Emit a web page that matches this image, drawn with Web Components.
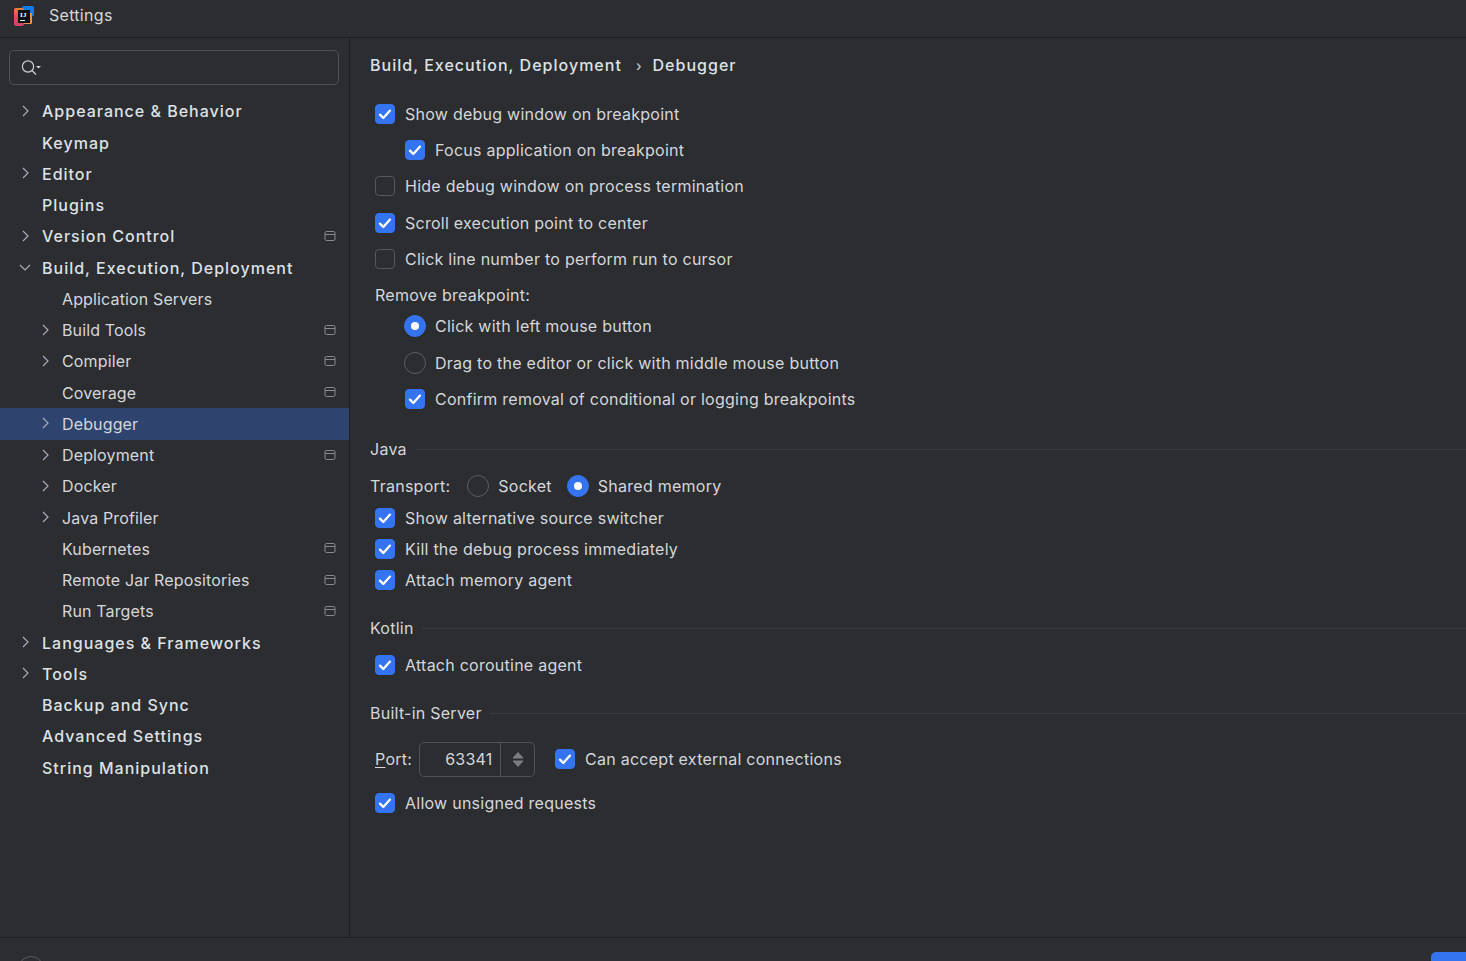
<!DOCTYPE html>
<html>
<head>
<meta charset="utf-8">
<title>Settings</title>
<style>
html, body { margin: 0; height: 100%; background: #2b2d30; }
body { overflow: hidden; font-family: 'Inter', 'Liberation Sans', sans-serif; color: #dfe1e5; }
</style>
</head>
<body>
<settings-window>
    <settings-titlebar slot="title">Settings</settings-titlebar>
    <settings-sidebar slot="side">
        <tree-item top arrow="right">Appearance &amp; Behavior</tree-item>
        <tree-item top>Keymap</tree-item>
        <tree-item top arrow="right">Editor</tree-item>
        <tree-item top>Plugins</tree-item>
        <tree-item top arrow="right" project>Version Control</tree-item>
        <tree-item top arrow="down">Build, Execution, Deployment</tree-item>
        <tree-item>Application Servers</tree-item>
        <tree-item arrow="right" project>Build Tools</tree-item>
        <tree-item arrow="right" project>Compiler</tree-item>
        <tree-item project>Coverage</tree-item>
        <tree-item arrow="right" selected>Debugger</tree-item>
        <tree-item arrow="right" project>Deployment</tree-item>
        <tree-item arrow="right">Docker</tree-item>
        <tree-item arrow="right">Java Profiler</tree-item>
        <tree-item project>Kubernetes</tree-item>
        <tree-item project>Remote Jar Repositories</tree-item>
        <tree-item project>Run Targets</tree-item>
        <tree-item top arrow="right">Languages &amp; Frameworks</tree-item>
        <tree-item top arrow="right">Tools</tree-item>
        <tree-item top>Backup and Sync</tree-item>
        <tree-item top>Advanced Settings</tree-item>
        <tree-item top>String Manipulation</tree-item>
    </settings-sidebar>
    <settings-panel slot="main">
        <option-group gap="12.3" style="margin-top:25.8px">
            <check-box checked>Show debug window on breakpoint</check-box>
            <check-box checked indent>Focus application on breakpoint</check-box>
            <check-box>Hide debug window on process termination</check-box>
            <check-box checked>Scroll execution point to center</check-box>
            <check-box>Click line number to perform run to cursor</check-box>
            <plain-label>Remove breakpoint:</plain-label>
        </option-group>
        <option-group gap="12.5" style="margin-top:7.2px">
            <radio-box checked indent>Click with left mouse button</radio-box>
            <radio-box indent>Drag to the editor or click with middle mouse button</radio-box>
            <check-box checked indent>Confirm removal of conditional or logging breakpoints</check-box>
        </option-group>
        <section-title style="margin-top:26px">Java</section-title>
        <transport-row style="margin-top:13px"></transport-row>
        <option-group gap="7" style="margin-top:8px">
            <check-box checked>Show alternative source switcher</check-box>
            <check-box checked>Kill the debug process immediately</check-box>
            <check-box checked>Attach memory agent</check-box>
        </option-group>
        <section-title style="margin-top:24px">Kotlin</section-title>
        <option-group style="margin-top:13px">
            <check-box checked>Attach coroutine agent</check-box>
        </option-group>
        <section-title style="margin-top:24px">Built-in Server</section-title>
        <port-row style="margin-top:16.5px"></port-row>
        <option-group style="margin-top:14.5px">
            <check-box checked>Allow unsigned requests</check-box>
        </option-group>
    </settings-panel>
    <settings-footer slot="foot"></settings-footer>
</settings-window>

<script>
const boxCheck = `<svg width="14" height="14" viewBox="0 0 14 14" fill="none"><path d="M2 7.6 L5.3 11 L12 3.6" stroke="#fff" stroke-width="2.3" stroke-linecap="round" stroke-linejoin="round"/></svg>`;

class SettingsWindow extends HTMLElement {
    constructor() {
        super();
        this.attachShadow({mode: 'open'});
        this.shadowRoot.innerHTML = `
        <style>
            :host { display: grid; width: 1466px; height: 961px; overflow: hidden;
                grid-template-rows: 38px 899px 24px; grid-template-columns: 350px 1fr; }
            .title { grid-column: 1 / 3; }
            .foot { grid-column: 1 / 3; }
        </style>
        <div class="title"><slot name="title"></slot></div>
        <slot name="side"></slot>
        <slot name="main"></slot>
        <div class="foot"><slot name="foot"></slot></div>`;
    }
}

class SettingsTitlebar extends HTMLElement {
    constructor() {
        super();
        this.attachShadow({mode: 'open'});
        this.shadowRoot.innerHTML = `
        <style>
            :host { display: flex; align-items: center; height: 38px; box-sizing: border-box;
                border-bottom: 1px solid #1e1f22; padding: 0 0 7px 14px; font-size: 16px; color: #d5d7db;
                letter-spacing: 0.3px; }
            svg { margin-right: 15px; }
        </style>
        <svg width="20" height="21" viewBox="0 0 20 21">
            <defs>
                <linearGradient id="left" x1="0" y1="0" x2="0" y2="1">
                    <stop offset="0" stop-color="#f0803c"/>
                    <stop offset="0.5" stop-color="#e8445a"/>
                    <stop offset="1" stop-color="#d8406e"/>
                </linearGradient>
            </defs>
            <rect x="8" y="1" width="12" height="10" rx="1.5" fill="#0b7cf0"/>
            <rect x="8" y="8" width="10" height="11" rx="1" fill="#f09040"/>
            <rect x="0" y="3" width="10" height="18" rx="2" fill="url(#left)"/>
            <rect x="4" y="5" width="12" height="13" fill="#101114"/>
            <path d="M6 15.5 H11" stroke="#e8e8e8" stroke-width="1"/>
            <text x="6" y="12" font-family="Liberation Serif" font-weight="700" font-size="7" fill="#fff">IJ</text>
        </svg>
        <slot></slot>`;
    }
}

class SettingsSidebar extends HTMLElement {
    constructor() {
        super();
        this.attachShadow({mode: 'open'});
        this.shadowRoot.innerHTML = `
        <style>
            :host { display: block; box-sizing: border-box; border-right: 1px solid #1e1f22; padding-top: 12px; }
            .search { display: flex; align-items: center; height: 35px; box-sizing: border-box; margin: 0 10px 10.85px 9px;
                border: 1px solid #4e5157; border-radius: 5px; padding-left: 11px; }
        </style>
        <div class="search">
            <svg width="22" height="18" viewBox="0 0 22 18" fill="none">
                <circle cx="7" cy="7.5" r="5.6" stroke="#ced0d6" stroke-width="1.2"/>
                <path d="M11 11.5 L15 15.5" stroke="#ced0d6" stroke-width="1.2"/>
                <path d="M15 7 H20 L17.5 9.6Z" fill="#ced0d6"/>
            </svg>
        </div>
        <slot></slot>`;
    }
}

class TreeItem extends HTMLElement {
    constructor() {
        super();
        this.attachShadow({mode: 'open'});
        const arrow = this.getAttribute('arrow');
        let icon = '';
        if (arrow == 'right') icon = '<path d="M6 3 L11 8 L6 13"/>';
        if (arrow == 'down') icon = '<path d="M3 6 L8 11 L13 6"/>';
        this.shadowRoot.innerHTML = `
        <style>
            :host { display: flex; align-items: center; height: 31.25px; position: relative;
                padding-left: 62px; padding-right: 13px; font-size: 16px; letter-spacing: 0.14px; color: #d5d7db; }
            :host([top]) { padding-left: 42px; font-weight: 500; letter-spacing: 1px; color: #dfe1e5; }
            :host([selected]) { background: #2e436e; }
            .arrow { position: absolute; left: 36.5px; top: 7px; }
            :host([top]) .arrow { left: 16.5px; }
            .text { flex: 1; }
            .project { display: none; margin-top: -1px; }
            :host([project]) .project { display: block; }
        </style>
        <svg class="arrow" width="16" height="16" viewBox="0 0 16 16" fill="none" stroke="#a8adbd" stroke-width="1.2">${icon}</svg>
        <span class="text"><slot></slot></span>
        <svg class="project" width="12" height="12" viewBox="0 0 12 12" fill="none" stroke="#868a91" stroke-width="1">
            <rect x="1" y="1.5" width="10" height="9" rx="1.5"/>
            <path d="M1 4.5 H11"/>
        </svg>`;
    }
}

class SettingsPanel extends HTMLElement {
    constructor() {
        super();
        this.attachShadow({mode: 'open'});
        this.shadowRoot.innerHTML = `
        <style>
            :host { display: block; padding: 0 0 0 20px; font-size: 16px; letter-spacing: 0.25px; color: #d5d7db; min-width: 0; overflow: hidden; }
            .crumbs { display: flex; align-items: center; height: 22px; margin-top: 16px; font-weight: 500;
                letter-spacing: 1.02px; color: #dfe1e5; }
            .sep { margin: 0 10px 0 14px; font-size: 14px; color: #c4c7cd; }
        </style>
        <div class="crumbs"><span>Build, Execution, Deployment</span><span class="sep">›</span><span>Debugger</span></div>
        <slot></slot>`;
    }
}

class OptionGroup extends HTMLElement {
    constructor() {
        super();
        this.attachShadow({mode: 'open'});
        this.shadowRoot.innerHTML = `
        <style>
            :host { display: flex; flex-direction: column; gap: ${this.getAttribute('gap') || 0}px; }
        </style>
        <slot></slot>`;
    }
}

class CheckBox extends HTMLElement {
    constructor() {
        super();
        this.attachShadow({mode: 'open'});
        this.shadowRoot.innerHTML = `
        <style>
            :host { display: flex; align-items: center; height: 24px; padding-left: 5px; }
            :host([indent]) { padding-left: 35px; }
            :host([inline]) { padding-left: 0; }
            .box { width: 20px; height: 20px; box-sizing: border-box; border: 1px solid #54575d; border-radius: 4px;
                margin-right: 10px; display: flex; align-items: center; justify-content: center; }
            :host([checked]) .box { background: #3574f0; border-color: #3574f0; }
        </style>
        <span class="box">${this.hasAttribute('checked') ? boxCheck : ''}</span>
        <slot></slot>`;
    }
}

class RadioBox extends HTMLElement {
    constructor() {
        super();
        this.attachShadow({mode: 'open'});
        this.shadowRoot.innerHTML = `
        <style>
            :host { display: flex; align-items: center; height: 24px; padding-left: 5px; }
            :host([indent]) { padding-left: 34px; }
            :host([inline]) { padding-left: 0; }
            .dot { width: 22px; height: 22px; box-sizing: border-box; border: 1px solid #5a5d63; border-radius: 50%;
                margin-right: 9px; display: flex; align-items: center; justify-content: center; }
            :host([checked]) .dot { background: #3574f0; border-color: #3574f0; }
            :host([checked]) .dot::after { content: ''; width: 8px; height: 8px; border-radius: 50%; background: #fff; }
        </style>
        <span class="dot"></span>
        <slot></slot>`;
    }
}

class PlainLabel extends HTMLElement {
    constructor() {
        super();
        this.attachShadow({mode: 'open'});
        this.shadowRoot.innerHTML = `
        <style>:host { display: flex; align-items: center; height: 24px; padding-left: 5px; }</style>
        <slot></slot>`;
    }
}

class SectionTitle extends HTMLElement {
    constructor() {
        super();
        this.attachShadow({mode: 'open'});
        this.shadowRoot.innerHTML = `
        <style>
            :host { display: flex; align-items: center; height: 24px; gap: 8px; }
            .line { flex: 1; height: 1px; background: #393b40; }
        </style>
        <slot></slot><span class="line"></span>`;
    }
}

class TransportRow extends HTMLElement {
    constructor() {
        super();
        this.attachShadow({mode: 'open'});
        this.shadowRoot.innerHTML = `
        <style>
            :host { display: flex; align-items: center; height: 24px; }
            .label { margin-right: 17px; }
            radio-box + radio-box { margin-left: 15px; }
        </style>
        <span class="label">Transport:</span>
        <radio-box inline>Socket</radio-box>
        <radio-box inline checked>Shared memory</radio-box>`;
    }
}

class PortRow extends HTMLElement {
    constructor() {
        super();
        this.attachShadow({mode: 'open'});
        this.shadowRoot.innerHTML = `
        <style>
            :host { display: flex; align-items: center; height: 35px; padding-left: 5px; }
            u { text-underline-offset: 2px; }
            .spin { display: flex; width: 116px; height: 35px; box-sizing: border-box; margin: 0 20px 0 7px;
                border: 1px solid #4e5157; border-radius: 5px; }
            .value { width: 81px; box-sizing: border-box; border-right: 1px solid #4e5157; text-align: right;
                padding-right: 7.5px; line-height: 33px; }
            .arrows { flex: 1; display: flex; align-items: center; justify-content: center; }
        </style>
        <span><u>P</u>ort:</span>
        <div class="spin">
            <div class="value">63341</div>
            <div class="arrows">
                <svg width="14" height="20" viewBox="0 0 14 20"><path d="M7 3.5 L12 9 H2Z M2 12 H12 L7 17.5Z" fill="#7a7e85" stroke="#7a7e85" stroke-linejoin="round"/></svg>
            </div>
        </div>
        <check-box inline checked>Can accept external connections</check-box>`;
    }
}

class SettingsFooter extends HTMLElement {
    constructor() {
        super();
        this.attachShadow({mode: 'open'});
        this.shadowRoot.innerHTML = `
        <style>
            :host { display: block; height: 24px; box-sizing: border-box; border-top: 1px solid #1e1f22; position: relative; overflow: hidden; }
            .help { position: absolute; left: 18px; top: 18px; width: 26px; height: 26px; box-sizing: border-box;
                border: 1px solid #5a5d63; border-radius: 50%; }
            .ok { position: absolute; left: 1431px; top: 14px; width: 60px; height: 30px; background: #3574f0; border-radius: 5px; }
        </style>
        <div class="help"></div>
        <div class="ok"></div>`;
    }
}

customElements.define('settings-window', SettingsWindow);
customElements.define('settings-titlebar', SettingsTitlebar);
customElements.define('settings-sidebar', SettingsSidebar);
customElements.define('tree-item', TreeItem);
customElements.define('settings-panel', SettingsPanel);
customElements.define('option-group', OptionGroup);
customElements.define('check-box', CheckBox);
customElements.define('radio-box', RadioBox);
customElements.define('plain-label', PlainLabel);
customElements.define('section-title', SectionTitle);
customElements.define('transport-row', TransportRow);
customElements.define('port-row', PortRow);
customElements.define('settings-footer', SettingsFooter);
</script>
</body>
</html>
